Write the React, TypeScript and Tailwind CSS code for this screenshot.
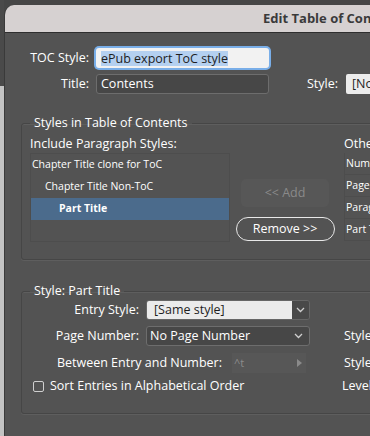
import React from 'react';

const font = { fontFamily: '"Open Sans", "Noto Sans", sans-serif' };

function Chevron({ className = '' }: { className?: string }) {
  return (
    <svg width="9" height="6" viewBox="0 0 9 6" className={className}>
      <path d="M1 1l3.5 3.5L8 1" fill="none" stroke="currentColor" strokeWidth="1.3" />
    </svg>
  );
}

function Fieldset({ title, className = '', children }: { title: string; className?: string; children: React.ReactNode }) {
  return (
    <fieldset className={`ml-[16px] w-[600px] rounded-[3px] border border-[#464646] shadow-[0_1px_0_#5e5e5e,inset_0_1px_0_#5e5e5e] ${className}`}>
      <legend className="ml-[8px] px-[4px] text-[12.5px] leading-[14px] text-white">{title}</legend>
      {children}
    </fieldset>
  );
}

export default function App() {
  return (
    <div className="flex h-[436px] w-[370px] overflow-hidden whitespace-nowrap bg-[#464646]" style={font}>
      <div className="flex w-[4px] shrink-0 flex-col">
        <div className="h-[86px] bg-[#4a4a4a]" />
        <div className="flex-1 bg-[#c3c3c3]" />
      </div>
      <div className="mt-[5px] w-[640px] shrink-0 overflow-hidden rounded-tl-[10px] border-l border-[#3a3a3a]">
        <div className="flex h-[28px] items-center border-b border-[#2e2e2e] bg-[#d6d1d1] pl-[258px]">
          <span className="text-[13px] font-bold text-[#3a3a3a]">Edit Table of Contents</span>
        </div>
        <div className="h-[420px] bg-[#535353] pt-[15px] text-[12.5px] text-white">
          <div className="flex h-[20px] items-center">
            <span className="w-[84px] text-right">TOC Style:</span>
            <div className="ml-[7px] flex h-[20px] w-[173px] items-center rounded-[3px] bg-[#f2f2f2] pl-[5px] shadow-[0_0_0_2px_#79aee8]">
              <span className="bg-[#b4d0f0] leading-[15px] text-[#1e1e1e]">ePub export ToC style</span>
            </div>
          </div>
          <div className="mt-[6px] flex h-[20px] items-center">
            <span className="w-[84px] text-right">Title:</span>
            <div className="ml-[7px] flex h-[20px] w-[173px] items-center rounded-[3px] border border-[#6d6d6d] bg-[#474747] pl-[4px]">
              <span>Contents</span>
            </div>
            <span className="ml-[38px]">Style:</span>
            <div className="ml-[8px] flex h-[20px] w-[120px] items-center rounded-[2px] bg-[#ececec] pl-[6px] text-[#1e1e1e]">[No Paragraph Style]</div>
          </div>

          <Fieldset title="Styles in Table of Contents" className="mt-[22px] h-[144px]">
            <div className="ml-[8px] mt-[6px] flex">
              <div className="w-[200px] shrink-0">
                <div className="leading-[16px]">Include Paragraph Styles:</div>
                <div className="mt-[1px] h-[89px] w-[200px] border border-[#4d4d4d] text-[10.5px]">
                  <div className="flex h-[22px] items-center pl-[1px]">Chapter Title clone for ToC</div>
                  <div className="flex h-[22px] items-center pl-[14px]">Chapter Title Non-ToC</div>
                  <div className="flex h-[22px] items-center bg-[#4b6b8c] pl-[28px] font-bold">Part Title</div>
                  <div className="h-[22px]" />
                </div>
              </div>
              <div className="ml-[5px] flex w-[100px] shrink-0 flex-col items-center pt-[43px]">
                <div className="flex h-[28px] w-[88px] items-center justify-center rounded-[5px] bg-[#575757] text-[#8a8a8a]">&lt;&lt; Add</div>
                <div className="mt-[10px] flex h-[24px] w-[99px] items-center justify-center rounded-full border border-[#e8e8e8]">Remove &gt;&gt;</div>
              </div>
              <div className="ml-[9px] w-[200px] shrink-0">
                <div className="leading-[16px]">Other Styles:</div>
                <div className="mt-[1px] border-l border-[#4d4d4d] text-[10.5px]">
                  {['Numbered Paragraph', 'Page Number', 'Paragraph Styles', 'Part Title'].map((s) => (
                    <div key={s} className="flex h-[22px] items-center border-b border-[#4d4d4d] pl-[1px]">{s}</div>
                  ))}
                </div>
              </div>
            </div>
          </Fieldset>

          <Fieldset title="Style: Part Title" className="mt-[24px] h-[130px]">
            <div className="flex">
              <div className="w-[320px] shrink-0">
                <div className="mt-[2px] flex h-[20px] items-center">
                  <span className="w-[117px] text-right">Entry Style:</span>
                  <div className="ml-[7px] flex h-[20px] w-[164px] overflow-hidden rounded-[3px] border border-[#666]">
                    <div className="flex flex-1 items-center bg-[#ebebeb] pl-[7px] text-[#1e1e1e]">[Same style]</div>
                    <div className="flex w-[17px] items-center justify-center bg-[#494949] text-[#d0d0d0]"><Chevron /></div>
                  </div>
                </div>
                <div className="mt-[6px] flex h-[20px] items-center">
                  <span className="w-[117px] text-right">Page Number:</span>
                  <div className="ml-[7px] flex h-[20px] w-[164px] items-center rounded-[3px] border border-[#6d6d6d] bg-[#474747] pl-[3px] pr-[6px]">
                    <span className="flex-1">No Page Number</span>
                    <Chevron className="text-[#d0d0d0]" />
                  </div>
                </div>
                <div className="mt-[7px] flex h-[20px] items-center">
                  <span className="w-[200px] text-right">Between Entry and Number:</span>
                  <div className="ml-[10px] flex h-[20px] w-[74px] items-center bg-[#575757] pl-[2px] pr-[4px]">
                    <span className="flex-1 text-[11px] text-[#8c8c8c]">^t</span>
                    <svg width="5" height="8" viewBox="0 0 5 8"><path d="M0 0l5 4-5 4z" fill="#8a8a8a" /></svg>
                  </div>
                </div>
                <div className="ml-[11px] mt-[3px] flex h-[20px] items-center">
                  <div className="h-[11px] w-[11px] rounded-[2px] border border-[#cfcfcf]" />
                  <span className="ml-[6px]">Sort Entries in Alphabetical Order</span>
                </div>
              </div>
              <div>
                <div className="mt-[28px] flex h-[20px] items-center pl-[2px]">Style for Number:</div>
                <div className="mt-[7px] flex h-[20px] items-center pl-[2px]">Style:</div>
                <div className="mt-[3px] flex h-[20px] items-center">Level:</div>
              </div>
            </div>
          </Fieldset>

          <Fieldset title="Options" className="mt-[22px] h-[60px]">
            <div />
          </Fieldset>
        </div>
      </div>
    </div>
  );
}
